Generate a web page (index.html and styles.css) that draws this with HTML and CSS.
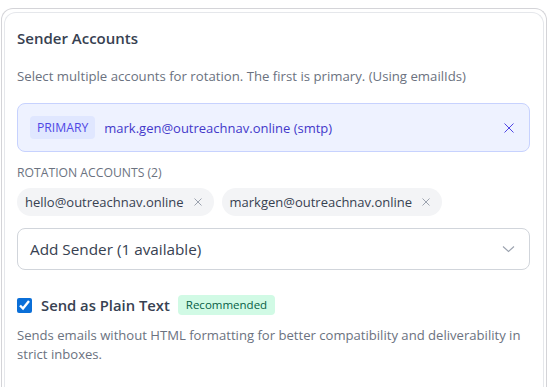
FILE: index.html
```html
<!DOCTYPE html>
<html>
<head>
<meta charset="utf-8">
<link rel="stylesheet" href="styles.css">
</head>
<body>
<div class="frame">
  <div class="card">
    <h2 class="title">Sender Accounts</h2>
    <p class="hint">Select multiple accounts for rotation. The first is primary. (Using emailIds)</p>
    <div class="primary">
      <span class="primary-badge">PRIMARY</span>
      <span class="primary-email">mark.gen@outreachnav.online (smtp)</span>
      <svg class="primary-x" width="10" height="10" viewBox="0 0 10 10"><path d="M0.5 0.5L9.5 9.5M9.5 0.5L0.5 9.5" stroke="#4f46e5" stroke-width="1" fill="none"/></svg>
    </div>
    <div class="section-label">ROTATION ACCOUNTS (2)</div>
    <div class="chips">
      <span class="chip">hello@outreachnav.online<svg class="chip-x" width="8" height="8" viewBox="0 0 8 8"><path d="M0.5 0.5L7.5 7.5M7.5 0.5L0.5 7.5" stroke="#9ca3af" stroke-width="1" fill="none"/></svg></span>
      <span class="chip">markgen@outreachnav.online<svg class="chip-x" width="8" height="8" viewBox="0 0 8 8"><path d="M0.5 0.5L7.5 7.5M7.5 0.5L0.5 7.5" stroke="#9ca3af" stroke-width="1" fill="none"/></svg></span>
    </div>
    <div class="select">
      <span>Add Sender (1 available)</span>
      <svg width="13" height="8" viewBox="0 0 13 8"><path d="M1 1.5L6.5 6.5L12 1.5" stroke="#9ca3af" stroke-width="1.1" fill="none"/></svg>
    </div>
    <label class="check-row">
      <input type="checkbox" class="check" checked>
      <span class="check-label">Send as Plain Text</span>
      <span class="rec">Recommended</span>
    </label>
    <p class="check-desc">Sends emails without HTML formatting for better compatibility and deliverability in strict inboxes.</p>
  </div>
</div>
</body>
</html>
```
FILE: styles.css
```css
* { box-sizing: border-box; }
html, body { margin: 0; padding: 0; background: #ffffff; }
body { font-family: "Open Sans", "Noto Sans", sans-serif; color: #374151; }
.frame {
  margin: 8px 4px 0 1px;
  padding: 3px 2px 0 2px;
  border: 1px solid #d4d4d8;
  border-bottom: none;
  border-radius: 12px 12px 0 0;
  height: 379px;
}
.card {
  border: 1px solid #e5e7eb;
  border-bottom: none;
  border-radius: 12px 12px 0 0;
  padding: 13px 13px 0 12px;
  height: 375px;
}
.title {
  margin: 0;
  font-size: 15px;
  line-height: 24px;
  font-weight: 600;
  color: #374151;
}
.hint {
  margin: 16px 0 0;
  font-size: 13.2px;
  line-height: 20px;
  color: #6b7280;
}
.primary {
  margin-top: 17px;
  height: 49px;
  display: flex;
  align-items: center;
  padding: 0 15px 0 12px;
  background: #eef2ff;
  border: 1px solid #c7d2fe;
  border-radius: 8px;
}
.primary-badge {
  background: #e0e7ff;
  color: #4f46e5;
  font-size: 12.2px;
  font-weight: 500;
  height: 23px;
  line-height: 23px;
  padding: 0 7px;
  border-radius: 4px;
}
.primary-email {
  margin-left: 9px;
  font-size: 13px;
  color: #4338ca;
  flex: 1;
}
.primary-x { display: block; }
.section-label {
  margin-top: 13px;
  font-size: 12.2px;
  line-height: 16px;
  color: #6b7280;
}
.chips {
  margin-top: 7px;
  display: flex;
  gap: 8px;
}
.chip {
  display: inline-flex;
  align-items: center;
  height: 28px;
  padding: 0 12px 0 8px;
  background: #f3f4f6;
  border-radius: 14px;
  font-size: 13px;
  color: #374151;
}
.chip-x { margin-left: 10px; }
.select {
  margin-top: 12px;
  height: 42px;
  border: 1px solid #d1d5db;
  border-radius: 8px;
  display: flex;
  align-items: center;
  justify-content: space-between;
  padding: 0 14px 0 12px;
  font-size: 15.3px;
  color: #374151;
}
.check-row {
  margin-top: 24px;
  display: flex;
  align-items: center;
  height: 22px;
}
.check {
  width: 15px;
  height: 15px;
  margin: 0 9px 0 0;
  accent-color: #0b6fd8;
}
.check-label {
  font-size: 14.8px;
  font-weight: 600;
  color: #374151;
}
.rec {
  margin-left: 8px;
  background: #d1fae5;
  color: #065f46;
  font-size: 11.5px;
  font-weight: 500;
  height: 20px;
  line-height: 20px;
  padding: 0 8px;
  border-radius: 4px;
}
.check-desc {
  margin: 10px 0 0;
  font-size: 13.1px;
  line-height: 19px;
  color: #6b7280;
}
```
